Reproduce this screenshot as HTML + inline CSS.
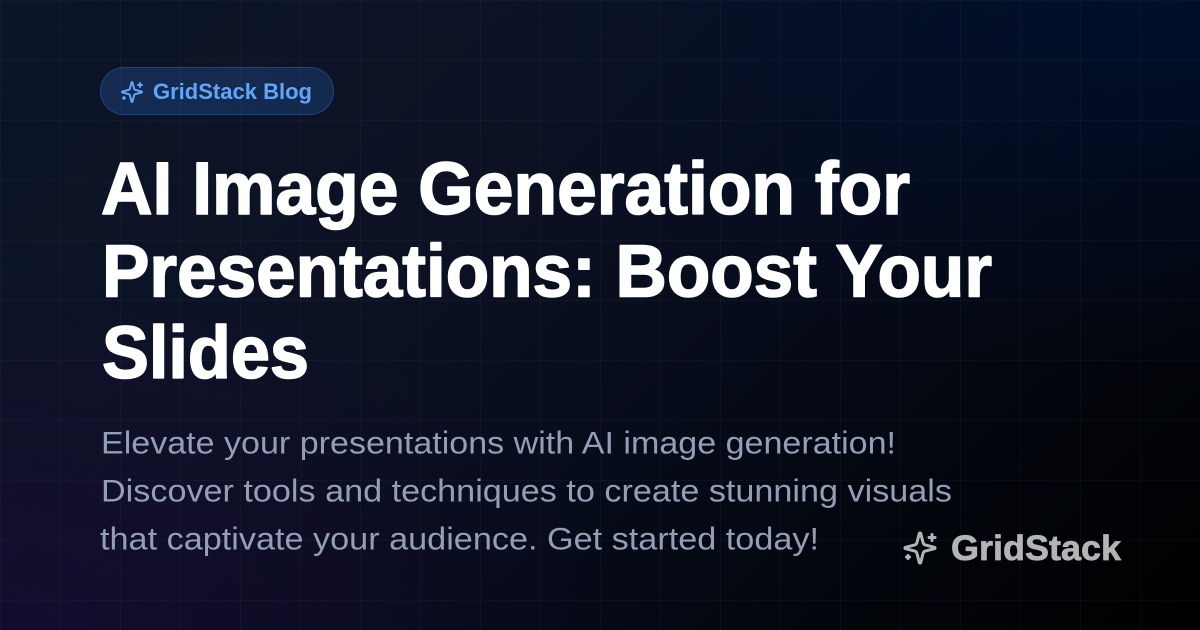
<!DOCTYPE html>
<html>
<head>
<meta charset="utf-8">
<style>
html,body{margin:0;padding:0;width:1200px;height:630px;overflow:hidden;background:#050a18}
#bg{position:absolute;left:0;top:0;width:1200px;height:630px;
background:
radial-gradient(ellipse 620px 360px at 0% 100%,rgba(26,8,52,.6),rgba(26,8,52,0) 100%),
radial-gradient(ellipse 760px 380px at 100% 0%,rgba(0,16,50,.75),rgba(0,16,50,0) 100%),
linear-gradient(135deg,#0b1528 0%,#0c1224 35%,#070c1b 58%,#02050b 80%,#000 100%);}
#grid{position:absolute;left:0;top:0;width:1200px;height:630px;
background-image:linear-gradient(rgba(148,163,184,.05) 1px,transparent 1px),linear-gradient(90deg,rgba(148,163,184,.05) 1px,transparent 1px);
background-size:60px 60px;}
#pill{position:absolute;left:100px;top:67px;width:232px;height:46px;border-radius:24px;background:rgba(59,130,246,.2);border:1px solid rgba(59,130,246,.3)}
svg{position:absolute;left:0;top:0}
</style>
</head>
<body>
<div id="bg"></div>
<div id="grid"></div>
<div id="pill"></div>
<svg width="1200" height="630" viewBox="0 0 1200 630" xmlns="http://www.w3.org/2000/svg">
<g transform="translate(120,80)" fill="none" stroke="#60a5fa" stroke-width="2" stroke-linejoin="round" stroke-linecap="round">
<path d="M9.937 15.5A2 2 0 0 0 8.5 14.063l-6.135-1.582a.5.5 0 0 1 0-.962L8.5 9.936A2 2 0 0 0 9.937 8.5l1.582-6.135a.5.5 0 0 1 .963 0L14.063 8.5A2 2 0 0 0 15.5 9.937l6.135 1.581a.5.5 0 0 1 0 .964L15.500 14.063a2 2 0 0 0-1.437 1.437l-1.582 6.135a.5.5 0 0 1-.963 0z"/>
<path d="M20 3v4M22 5h-4M4 17v2M5 18H3"/>
</g>
<text x="153" y="99" font-family="Liberation Sans, sans-serif" font-size="22.500" font-weight="700" fill="#60a5fa" textLength="159" lengthAdjust="spacingAndGlyphs">GridStack Blog</text>

<g font-family="Liberation Sans, sans-serif" font-size="74" font-weight="700" fill="#fff" stroke="#fff" stroke-width="1.600" stroke-linejoin="round">
<text x="101" y="214" textLength="809" lengthAdjust="spacingAndGlyphs">AI Image Generation for</text>
<text x="102" y="296.500" textLength="890" lengthAdjust="spacingAndGlyphs">Presentations: Boost Your</text>
<text x="102" y="378" textLength="207" lengthAdjust="spacingAndGlyphs">Slides</text>
</g>

<g font-family="Liberation Sans, sans-serif" font-size="31.500" fill="#929fb6">
<text x="101" y="453.500" textLength="795" lengthAdjust="spacingAndGlyphs">Elevate your presentations with AI image generation!</text>
<text x="101" y="501.500" textLength="851" lengthAdjust="spacingAndGlyphs">Discover tools and techniques to create stunning visuals</text>
<text x="100" y="549.500" textLength="719" lengthAdjust="spacingAndGlyphs">that captivate your audience. Get started today!</text>
</g>

<g opacity="0.7">
<g transform="translate(902,530) scale(1.500)" fill="none" stroke="#fff" stroke-width="2" stroke-linejoin="round" stroke-linecap="round">
<path d="M9.937 15.5A2 2 0 0 0 8.5 14.063l-6.135-1.582a.5.5 0 0 1 0-.962L8.5 9.936A2 2 0 0 0 9.937 8.5l1.582-6.135a.5.5 0 0 1 .963 0L14.063 8.5A2 2 0 0 0 15.5 9.937l6.135 1.581a.5.5 0 0 1 0 .964L15.500 14.063a2 2 0 0 0-1.437 1.437l-1.582 6.135a.5.5 0 0 1-.963 0z"/>
<path d="M20 3v4M22 5h-4M4 17v2M5 18H3"/>
</g>
<text x="951" y="560" font-family="Liberation Sans, sans-serif" font-size="35" font-weight="700" fill="#fff" stroke="#fff" stroke-width="0.700" stroke-linejoin="round" textLength="170" lengthAdjust="spacingAndGlyphs">GridStack</text>
</g>
</svg>
</body>
</html>
